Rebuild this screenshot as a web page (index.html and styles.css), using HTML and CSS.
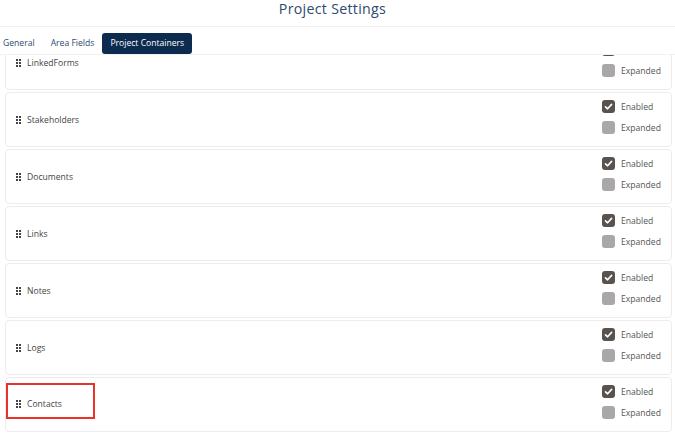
FILE: index.html
```html
<!DOCTYPE html>
<html>
<head>
<meta charset="utf-8">
<link rel="stylesheet" href="styles.css">
</head>
<body>
<div class="page">
  <header class="header"><h1 class="title">Project Settings</h1></header>
  <nav class="tabs">
    <span class="tab">General</span>
    <span class="tab">Area Fields</span>
    <span class="tab active">Project Containers</span>
  </nav>
  <div class="viewport">
    <div class="list">
      <div class="card">
        <div class="label"><span class="grip"><i></i><i></i><i></i><i></i><i></i><i></i></span>LinkedForms</div>
        <div class="opts">
          <div class="opt"><span class="box on"><svg viewBox="0 0 13 13"><path d="M3.5 6.8 L5.6 8.8 L9.6 4.4" fill="none" stroke="#fff" stroke-width="1.6" stroke-linecap="round" stroke-linejoin="round"/></svg></span>Enabled</div>
          <div class="opt"><span class="box"></span>Expanded</div>
        </div>
      </div>
      <div class="card">
        <div class="label"><span class="grip"><i></i><i></i><i></i><i></i><i></i><i></i></span>Stakeholders</div>
        <div class="opts">
          <div class="opt"><span class="box on"><svg viewBox="0 0 13 13"><path d="M3.5 6.8 L5.6 8.8 L9.6 4.4" fill="none" stroke="#fff" stroke-width="1.6" stroke-linecap="round" stroke-linejoin="round"/></svg></span>Enabled</div>
          <div class="opt"><span class="box"></span>Expanded</div>
        </div>
      </div>
      <div class="card">
        <div class="label"><span class="grip"><i></i><i></i><i></i><i></i><i></i><i></i></span>Documents</div>
        <div class="opts">
          <div class="opt"><span class="box on"><svg viewBox="0 0 13 13"><path d="M3.5 6.8 L5.6 8.8 L9.6 4.4" fill="none" stroke="#fff" stroke-width="1.6" stroke-linecap="round" stroke-linejoin="round"/></svg></span>Enabled</div>
          <div class="opt"><span class="box"></span>Expanded</div>
        </div>
      </div>
      <div class="card">
        <div class="label"><span class="grip"><i></i><i></i><i></i><i></i><i></i><i></i></span>Links</div>
        <div class="opts">
          <div class="opt"><span class="box on"><svg viewBox="0 0 13 13"><path d="M3.5 6.8 L5.6 8.8 L9.6 4.4" fill="none" stroke="#fff" stroke-width="1.6" stroke-linecap="round" stroke-linejoin="round"/></svg></span>Enabled</div>
          <div class="opt"><span class="box"></span>Expanded</div>
        </div>
      </div>
      <div class="card">
        <div class="label"><span class="grip"><i></i><i></i><i></i><i></i><i></i><i></i></span>Notes</div>
        <div class="opts">
          <div class="opt"><span class="box on"><svg viewBox="0 0 13 13"><path d="M3.5 6.8 L5.6 8.8 L9.6 4.4" fill="none" stroke="#fff" stroke-width="1.6" stroke-linecap="round" stroke-linejoin="round"/></svg></span>Enabled</div>
          <div class="opt"><span class="box"></span>Expanded</div>
        </div>
      </div>
      <div class="card">
        <div class="label"><span class="grip"><i></i><i></i><i></i><i></i><i></i><i></i></span>Logs</div>
        <div class="opts">
          <div class="opt"><span class="box on"><svg viewBox="0 0 13 13"><path d="M3.5 6.8 L5.6 8.8 L9.6 4.4" fill="none" stroke="#fff" stroke-width="1.6" stroke-linecap="round" stroke-linejoin="round"/></svg></span>Enabled</div>
          <div class="opt"><span class="box"></span>Expanded</div>
        </div>
      </div>
      <div class="card">
        <div class="label highlight"><span class="grip"><i></i><i></i><i></i><i></i><i></i><i></i></span>Contacts</div>
        <div class="opts">
          <div class="opt"><span class="box on"><svg viewBox="0 0 13 13"><path d="M3.5 6.8 L5.6 8.8 L9.6 4.4" fill="none" stroke="#fff" stroke-width="1.6" stroke-linecap="round" stroke-linejoin="round"/></svg></span>Enabled</div>
          <div class="opt"><span class="box"></span>Expanded</div>
        </div>
      </div>
    </div>
  </div>
</div>
</body>
</html>
```
FILE: styles.css
```css
* { box-sizing: border-box; }
html, body { margin: 0; padding: 0; background: #fff; }
body {
  font-family: "Open Sans", "DejaVu Sans", sans-serif;
  color: #3d3d3d;
  width: 675px;
  height: 433px;
  overflow: hidden;
}
.page { display: flex; flex-direction: column; height: 433px; }
.header {
  height: 27px;
  border-bottom: 1px solid #f0f0f0;
  display: flex;
  justify-content: center;
  align-items: flex-start;
  padding-right: 10px;
}
.title {
  margin: 0;
  font-size: 14.2px;
  font-weight: 400;
  color: #2e4a6e;
  line-height: 18px;
  letter-spacing: 0.3px;
}
.tabs {
  display: flex;
  align-items: flex-end;
  height: 27px;
  padding-left: 3px;
}
.tab {
  font-size: 8.6px;
  color: #2e4a6e;
  height: 21px;
  line-height: 21px;
  white-space: nowrap;
}
.tab:nth-child(1) { margin-right: 16px; }
.tab:nth-child(2) { margin-right: 8px; }
.tab.active {
  background: #0d2b4f;
  color: #fff;
  border-radius: 3px;
  padding: 0 8px;
  min-width: 90px;
}
.viewport {
  flex: 1;
  overflow: hidden;
  border-top: 1px solid #f2f2f2;
}
.list {
  margin-top: -20px;
  padding: 0 3px 0 5px;
  display: flex;
  flex-direction: column;
  gap: 2px;
}
.card {
  height: 55px;
  border: 1px solid #ececec;
  border-radius: 4px;
  display: flex;
  justify-content: space-between;
  align-items: center;
  padding: 0 9px 0 10px;
}
.label {
  display: flex;
  align-items: center;
  font-size: 8.6px;
  color: #444;
  gap: 6px;
}
.label.highlight {
  border: 2px solid #e8322a;
  margin-left: -10px;
  padding: 6px 0 0 8px;
  width: 89px;
  height: 36px;
  align-self: flex-start;
  margin-top: 5px;
}
.grip {
  display: grid;
  grid-template-columns: 2px 2px;
  grid-template-rows: 2px 2px 2px;
  gap: 1px 1px;
  width: 5px;
}
.grip i { width: 2px; height: 2px; background: #444; display: block; }
.opts {
  align-self: flex-start;
  padding-top: 3px;
  display: flex;
  flex-direction: column;
  width: 60px;
}
.opt {
  height: 21px;
  display: flex;
  align-items: center;
  gap: 6px;
  font-size: 8.6px;
  color: #555;
}
.box {
  width: 13px;
  height: 13px;
  border-radius: 3px;
  background: #a9a7a7;
  display: inline-block;
  flex: none;
}
.box.on { background: #58534f; }
.box svg { width: 13px; height: 13px; display: block; }
```
